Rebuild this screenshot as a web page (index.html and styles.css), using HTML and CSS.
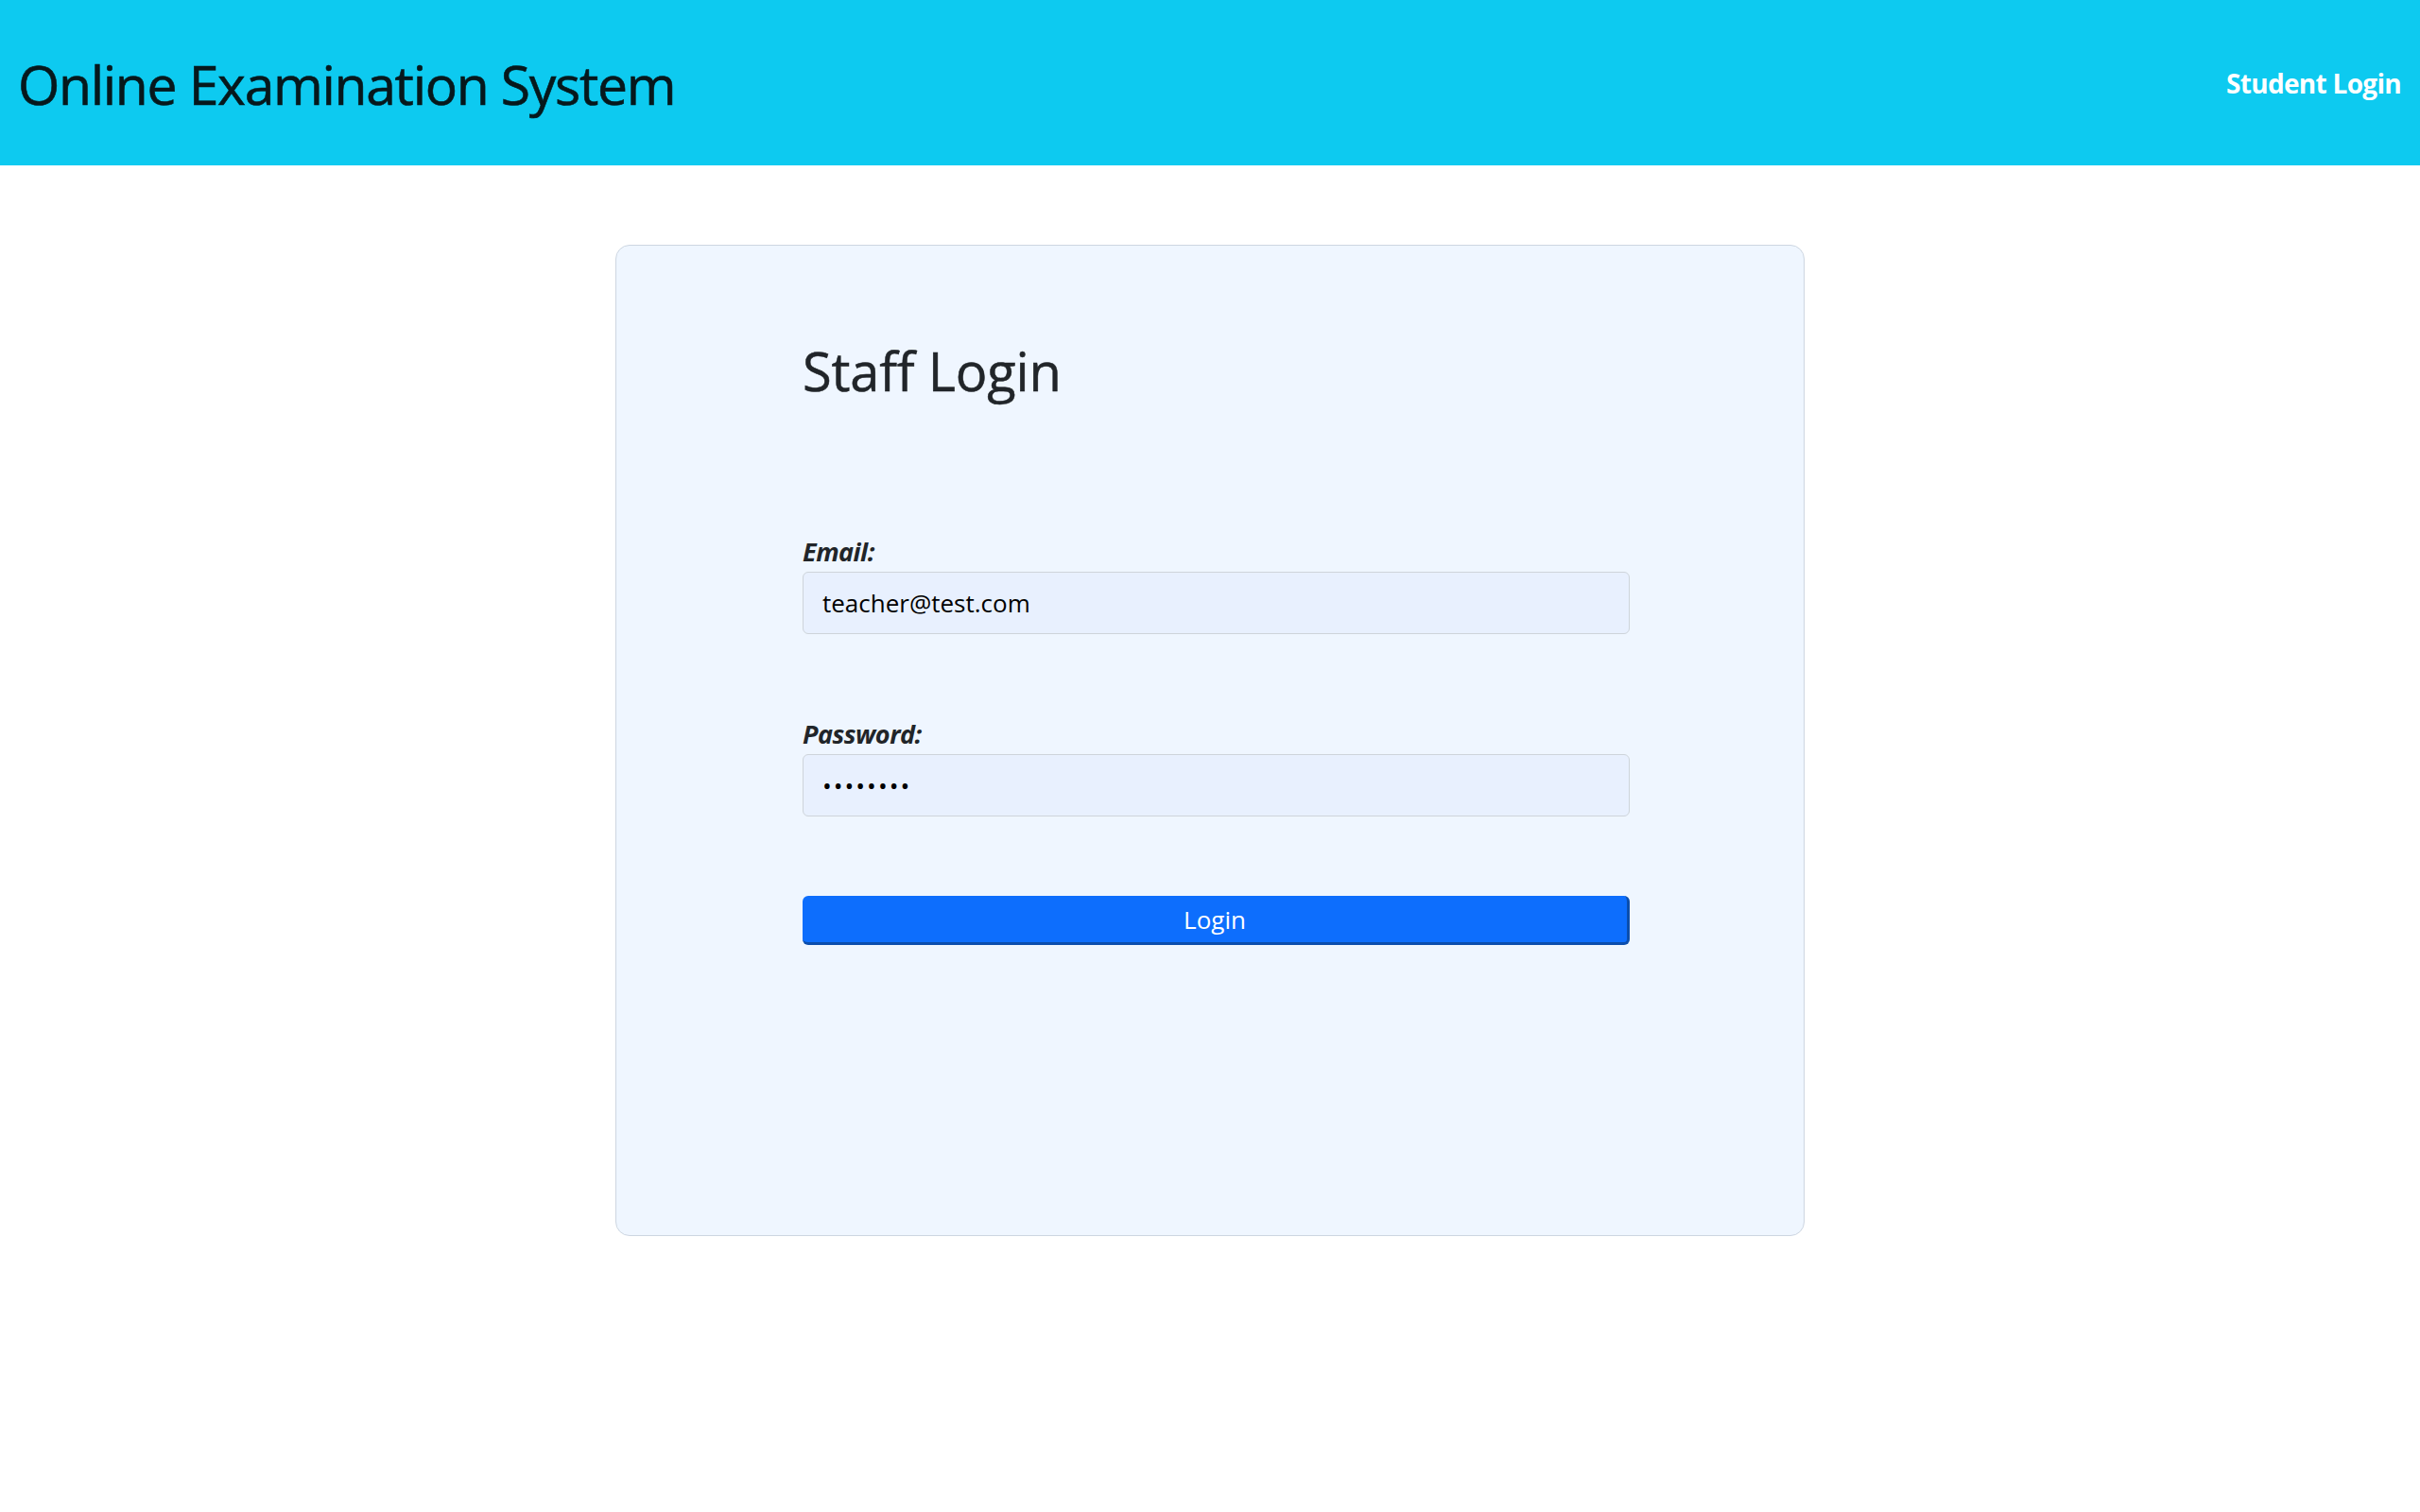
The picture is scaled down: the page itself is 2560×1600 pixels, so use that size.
FILE: index.html
```html
<!DOCTYPE html>
<html lang="en">
<head>
<meta charset="utf-8">
<title>Staff Login - Online Examination System</title>
<link rel="stylesheet" href="styles.css">
</head>
<body>
<header class="topbar">
  <h1 class="brand">Online Examination System</h1>
  <a class="nav-link" href="#">Student Login</a>
</header>
<main class="page">
  <section class="card">
    <div class="form-wrap">
      <h2 class="card-title">Staff Login</h2>
      <form class="login-form">
        <div class="field">
          <label class="field-label" for="email">Email:</label>
          <input class="field-input" id="email" type="email" value="teacher@test.com">
        </div>
        <div class="field">
          <label class="field-label" for="password">Password:</label>
          <input class="field-input field-password" id="password" type="password" value="password">
        </div>
        <button class="btn-login" type="button">Login</button>
      </form>
    </div>
  </section>
</main>
</body>
</html>
```
FILE: styles.css
```css
* { box-sizing: border-box; }
html, body { margin: 0; padding: 0; background: #ffffff; }
body { font-family: "Open Sans", "Noto Sans", sans-serif; color: #212529; }

.topbar {
  height: 175px;
  background: #0dcaf0;
  display: flex;
  align-items: center;
  justify-content: space-between;
  padding: 0 20px 0 19px;
}
.brand {
  margin: 0;
  font-size: 57px;
  font-weight: 500;
  letter-spacing: -1.3px;
  line-height: 1;
  color: #06181c;
  padding-top: 3px;
  -webkit-text-stroke: 0.6px #06181c;
}
.nav-link {
  color: #ffffff;
  text-decoration: none;
  font-weight: 700;
  font-size: 28px;
  letter-spacing: -0.7px;
  line-height: 1;
}

.page { padding-top: 84px; display: flex; justify-content: center; }
.card {
  width: 1258px;
  height: 1049px;
  background: #eff6ff;
  border: 1px solid #cdd6e1;
  border-radius: 15px;
  padding: 98px 0 0 197px;
}
.form-wrap { width: 875px; }
.card-title {
  margin: 0;
  font-size: 56px;
  font-weight: 500;
  line-height: 68px;
  letter-spacing: -0.2px;
  color: #212529;
  -webkit-text-stroke: 0.5px #212529;
}
.login-form { margin-top: 141px; display: flex; flex-direction: column; }
.field { display: flex; flex-direction: column; }
.field + .field { margin-top: 89px; }
.field-label {
  font-size: 27px;
  font-weight: 700;
  font-style: italic;
  line-height: 34px;
  letter-spacing: -0.5px;
  color: #212529;
  margin-bottom: 4px;
}
.field-input {
  height: 66px;
  width: 100%;
  background: #e8f0fe;
  border: 1px solid #ced4da;
  border-radius: 6px;
  padding: 0 20px;
  font-family: "Open Sans", "Noto Sans", sans-serif;
  font-size: 26px;
  color: #000000;
  outline: none;
}
.field-password { letter-spacing: 2px; }
.btn-login {
  margin-top: 84px;
  height: 52px;
  width: 100%;
  background: #0d6efd;
  color: #ffffff;
  border: 0;
  border-right: 3px solid #0b4ead;
  border-bottom: 3px solid #0b4ead;
  border-radius: 6px;
  font-family: "Open Sans", "Noto Sans", sans-serif;
  font-size: 26px;
  line-height: 1;
  padding: 0;
}
```
